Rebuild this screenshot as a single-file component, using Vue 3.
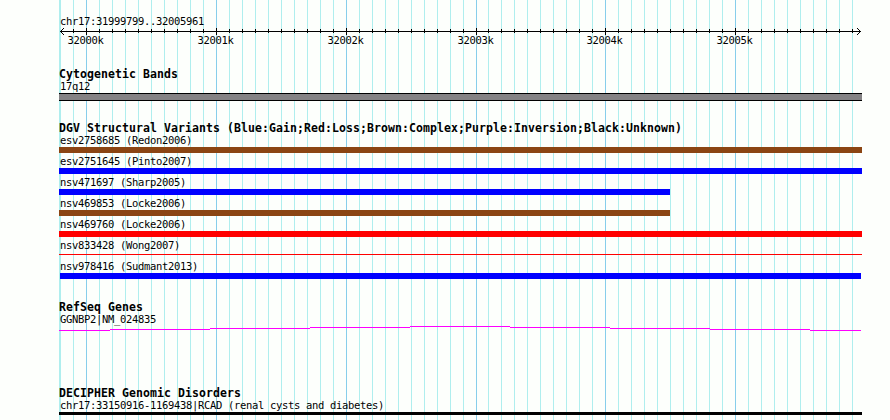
<script setup>
const start = 31999799;
const stop = 32005961;
const scale = 800 / (stop - start + 1);

const toX = (pos) => Math.round(60 + (pos - start) * scale);

const ticks = [];
for (let pos = 31999800; pos <= stop; pos += 100) {
  ticks.push({ pos, x: toX(pos), major: pos % 1000 === 0 });
}
const majors = ticks.filter((tick) => tick.major);

const variants = [
  { name: 'esv2758685 (Redon2006)', type: 'complex' },
  { name: 'esv2751645 (Pinto2007)', type: 'gain' },
  { name: 'nsv471697 (Sharp2005)', type: 'gain', short: true },
  { name: 'nsv469853 (Locke2006)', type: 'complex', short: true },
  { name: 'nsv469760 (Locke2006)', type: 'loss' },
  { name: 'nsv833428 (Wong2007)', type: 'loss', thin: true },
  { name: 'nsv978416 (Sudmant2013)', type: 'gain', inset: true },
];
</script>

<template>
  <div class="browser">
    <svg class="grid" width="890" height="420" shape-rendering="crispEdges">
      <rect class="minor" x="59" y="0" width="1" height="420" />
      <rect
        v-for="tick in ticks"
        :key="tick.pos"
        :class="tick.major ? 'major' : 'minor'"
        :x="tick.x"
        y="0"
        width="1"
        height="420"
      />
    </svg>

    <header class="ruler">
      <div class="label">chr17:{{ start }}..{{ stop }}</div>
      <svg class="axis" width="890" height="22" shape-rendering="crispEdges">
        <rect x="60" y="4" width="801" height="1" />
        <rect
          v-for="tick in ticks.slice(1)"
          :key="tick.pos"
          :x="tick.x"
          :y="tick.major ? 1 : 2"
          width="1"
          :height="tick.major ? 7 : 4"
        />
        <path d="M61 3h1v1h-1zM61 5h1v1h-1zM62 2h1v1h-1zM62 6h1v1h-1zM63 1h1v1h-1zM63 7h1v1h-1z" />
        <path d="M859 3h1v1h-1zM859 5h1v1h-1zM858 2h1v1h-1zM858 6h1v1h-1zM857 1h1v1h-1zM857 7h1v1h-1z" />
        <text v-for="tick in majors" :key="tick.pos" :x="tick.x - 18.5" y="17">{{ tick.pos / 1000 }}k</text>
      </svg>
    </header>

    <section class="track bands">
      <h2>Cytogenetic Bands</h2>
      <div class="label">17q12</div>
      <div class="band"></div>
    </section>

    <section class="track variants">
      <h2>DGV Structural Variants (Blue:Gain;Red:Loss;Brown:Complex;Purple:Inversion;Black:Unknown)</h2>
      <div v-for="variant in variants" :key="variant.name" class="variant">
        <div class="label">{{ variant.name }}</div>
        <div
          class="bar"
          :class="[variant.type, { short: variant.short, thin: variant.thin, inset: variant.inset }]"
        ></div>
      </div>
    </section>

    <section class="track genes">
      <h2>RefSeq Genes</h2>
      <div class="label">GGNBP2|NM_024835</div>
      <svg class="gene" width="890" height="5" shape-rendering="crispEdges">
        <path
          d="M59 4h51v1h-51zM110 3h100v1h-100zM210 2h100v1h-100zM310 1h100v1h-100zM410 0h100v1h-100zM510 1h100v1h-100zM610 2h100v1h-100zM710 3h100v1h-100zM810 4h51v1h-51z"
        />
      </svg>
    </section>

    <section class="track disorders">
      <h2>DECIPHER Genomic Disorders</h2>
      <div class="label">chr17:33150916-1169438|RCAD (renal cysts and diabetes)</div>
      <div class="disorder"></div>
    </section>
  </div>
</template>

<style>
body {
  margin: 0;
  background: #fdfffc;
}
</style>

<style scoped>
.browser {
  position: relative;
  width: 890px;
  height: 420px;
  overflow: hidden;
  background: #fdfffc;
  color: #000;
  font-family: 'DejaVu Sans Mono', monospace;
}

.grid {
  position: absolute;
  top: 0;
  left: 0;
}

.minor {
  fill: #afeeee;
}

.major {
  fill: #87ceeb;
}

.ruler,
.track {
  position: relative;
  display: flex;
  flex-direction: column;
}

.ruler {
  padding-top: 15px;
}

.label {
  height: 12px;
  padding-left: 60px;
  font-size: 10.5px;
  line-height: 12px;
  letter-spacing: -0.32px;
  white-space: pre;
}

.axis,
.gene {
  display: block;
}

.axis text {
  font-size: 10.5px;
  letter-spacing: -0.32px;
}

h2 {
  height: 12px;
  margin: 0;
  padding-left: 59px;
  font-size: 11.5px;
  font-weight: 700;
  line-height: 13px;
  letter-spacing: 0.077px;
  white-space: pre;
}

.bands {
  padding-top: 19px;
}

.band {
  box-sizing: border-box;
  width: 803px;
  height: 8px;
  margin: 1px 0 0 59px;
  border: solid #000;
  border-width: 1px 0;
  background: #848284;
}

.variants {
  padding-top: 21px;
}

.variant {
  height: 21px;
}

.bar {
  width: 803px;
  height: 6px;
  margin: 1px 0 0 59px;
}

.short {
  width: 611px;
}

.thin {
  height: 1px;
  margin-top: 3px;
}

.inset {
  width: 801px;
  margin-left: 60px;
}

.complex {
  background: #8b4513;
}

.gain {
  background: #00f;
}

.loss {
  background: #f00;
}

.genes {
  padding-top: 20px;
}

.gene {
  margin-top: 1px;
  fill: #f0f;
}

.disorders {
  padding-top: 56px;
}

.disorder {
  width: 803px;
  height: 3px;
  margin: 1px 0 0 59px;
  background: #000;
}
</style>
